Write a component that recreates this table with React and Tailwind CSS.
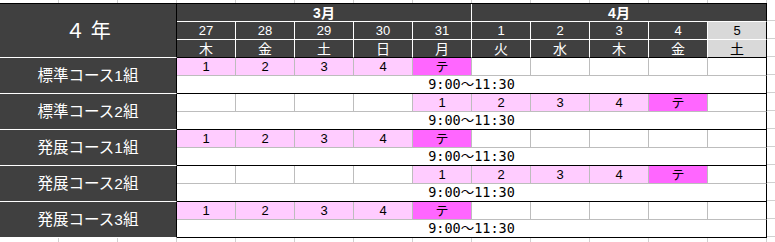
const days = [27, 28, 29, 30, 31, 1, 2, 3, 4, 5];
const weekdays = ['木', '金', '土', '日', '月', '火', '水', '木', '金', '土'];

const groups = [
  { name: '標準コース1組', start: 0 },
  { name: '標準コース2組', start: 4 },
  { name: '発展コース1組', start: 0 },
  { name: '発展コース2組', start: 4 },
  { name: '発展コース3組', start: 0 },
];

function GridStrip({ height }) {
  return (
    <div className={`flex ${height}`}>
      {Array.from({ length: 14 }).map((_, i) => (
        <div key={i} className="w-[59px] shrink-0 border-r border-[#d0d0d0]" />
      ))}
    </div>
  );
}

function DayCell({ i, children, bottom }) {
  const last = i === 9;
  return (
    <div
      className={`flex items-center justify-center border-r ${bottom} ${
        last ? 'bg-[#d9d9d9] text-black border-r-black' : 'bg-[#404040] text-white border-r-white'
      }`}
    >
      {children}
    </div>
  );
}

function GroupRows({ group }) {
  return (
    <>
      <div className="row-span-2 flex items-center justify-center bg-[#404040] text-white text-[15.5px] border-r border-r-black border-b border-b-white">
        {group.name}
      </div>
      {days.map((d, i) => {
        const n = i - group.start;
        let cls = 'bg-white';
        let label = '';
        if (n >= 0 && n < 4) {
          cls = 'bg-[#ffccff]';
          label = n + 1;
        } else if (n === 4) {
          cls = 'bg-[#ff66ff]';
          label = 'テ';
        }
        return (
          <div
            key={i}
            className={`flex items-center justify-center text-[13px] border-b border-b-[#bdbdbd] border-r ${
              i === 9 ? 'border-r-black' : 'border-r-[#bdbdbd]'
            } ${cls}`}
          >
            {label}
          </div>
        );
      })}
      <div className="col-span-10 flex items-center justify-center text-[13.5px] font-['DejaVu_Sans_Mono','Noto_Sans_CJK_JP',monospace] bg-white border-r border-r-black border-b border-b-black">
        9:00～11:30
      </div>
    </>
  );
}

export default function App() {
  return (
    <div className="w-[775px] h-[242px] overflow-hidden bg-white font-['Liberation_Sans','Noto_Sans_CJK_JP',sans-serif] leading-none">
      <GridStrip height="h-[3px]" />
      <div className="flex">
        <div className="grid grid-cols-[177px_repeat(10,59px)] auto-rows-[18px] border-t border-black shrink-0">
          <div className="row-span-3 flex items-center justify-center bg-[#404040] text-white text-[20px] border-r border-r-black border-b border-b-white">
            ４ 年
          </div>
          <div className="col-span-5 flex items-center justify-center bg-[#404040] text-white text-[14px] font-bold border-r border-r-white border-b border-b-white">
            3月
          </div>
          <div className="col-span-5 flex items-center justify-center bg-[#404040] text-white text-[14px] font-bold border-r border-r-black border-b border-b-white">
            4月
          </div>
          {days.map((d, i) => (
            <DayCell key={`d${i}`} i={i} bottom="border-b border-b-white text-[13px]">
              {d}
            </DayCell>
          ))}
          {weekdays.map((w, i) => (
            <DayCell key={`w${i}`} i={i} bottom="border-b border-b-black text-[14px]">
              {w}
            </DayCell>
          ))}
          {groups.map((g, i) => (
            <GroupRows key={i} group={g} />
          ))}
        </div>
        <div className="flex flex-col w-[8px] shrink-0">
          {Array.from({ length: 13 }).map((_, i) => (
            <div key={i} className="h-[18px] border-b border-[#d0d0d0]" />
          ))}
        </div>
      </div>
      <GridStrip height="h-[6px]" />
    </div>
  );
}
